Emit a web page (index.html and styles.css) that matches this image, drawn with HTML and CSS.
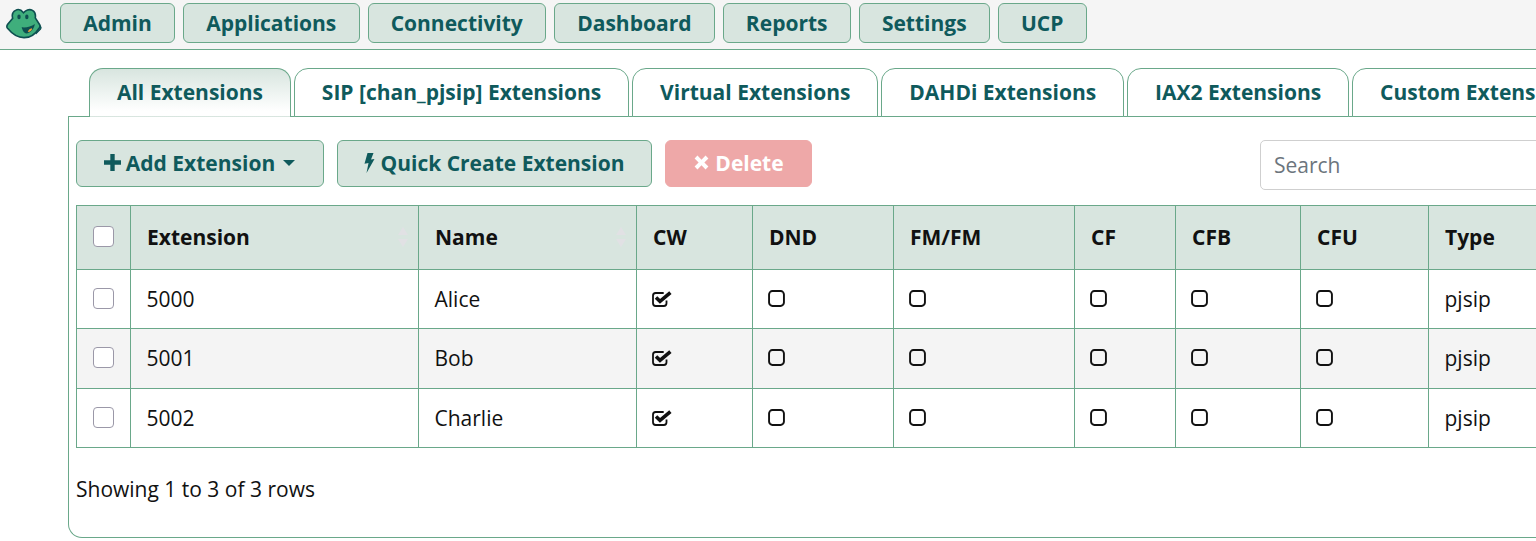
FILE: index.html
```html
<!DOCTYPE html>
<html lang="en">
<head>
<meta charset="utf-8">
<title>Extensions</title>
<link rel="stylesheet" href="styles.css">
</head>
<body>
<svg class="defs" width="0" height="0" aria-hidden="true">
  <symbol id="sq" viewBox="0 0 16 16"><rect x="1" y="1" width="14" height="14" rx="3.200" fill="none" stroke="currentColor" stroke-width="1.800"/></symbol>
  <symbol id="sqc" viewBox="0 0 20 16"><path d="M14.500 9.500V12.300a2.700 2.700 0 0 1-2.700 2.700H3.700A2.700 2.700 0 0 1 1 12.300V4.700A2.700 2.700 0 0 1 3.700 2h8" fill="none" stroke="currentColor" stroke-width="1.800"/><path d="M4 6.500L8 10.300 18.400 1.600" fill="none" stroke="currentColor" stroke-width="3.600"/></symbol>
  <symbol id="sort" viewBox="0 0 10 20"><path d="M5 0l5 8H0zM5 20l5-8H0z" fill="#e1e1e4"/></symbol>
</svg>
<nav class="topbar">
  <svg class="logo" viewBox="0 0 40 34" aria-hidden="true">
    <path d="M30 11l7.500 8.500c.8 1 .8 2 0 3L33 27l-3-8z" fill="#1b8b8a" stroke="#0e4f50" stroke-width="1.400"/>
    <path d="M11 2.500C14.500 .5 17.500 2.500 19.500 5c2-2.500 6-4.500 9.500-2.500 3 1.700 3.500 5 3 8l4.500 7c.8 1.500.5 3-.5 4-3 5-8.500 10-16 10S7 27 2.500 21.500c-1-1.300-1-2.500 0-4L8 11C7 7.500 8 4 11 2.500z" fill="#3fae7c" stroke="#0e4f50" stroke-width="1.700"/>
    <ellipse cx="14.700" cy="9.500" rx="1.800" ry="2.500" fill="#0e4f50"/><ellipse cx="23" cy="9.500" rx="1.800" ry="2.500" fill="#0e4f50"/>
    <path d="M17.500 20.500c5 .5 10-.5 14-3.500-.5 5-5 10-9 10-2.500 0-4-3-5-6.500z" fill="#0e4f50"/>
    <path d="M24 25.500c.5-2 2-3.500 4.500-4 .3 2-1.500 4-4.500 4z" fill="#f0a13a"/>
  </svg>
  <a class="navbtn">Admin</a>
  <a class="navbtn">Applications</a>
  <a class="navbtn">Connectivity</a>
  <a class="navbtn">Dashboard</a>
  <a class="navbtn">Reports</a>
  <a class="navbtn">Settings</a>
  <a class="navbtn">UCP</a>
</nav>
<main class="content">
  <ul class="tabs">
    <li class="tab active">All Extensions</li>
    <li class="tab">SIP [chan_pjsip] Extensions</li>
    <li class="tab">Virtual Extensions</li>
    <li class="tab">DAHDi Extensions</li>
    <li class="tab">IAX2 Extensions</li>
    <li class="tab">Custom Extensions</li>
  </ul>
  <section class="panel">
    <div class="toolbar">
      <button class="btn add"><svg class="ic" viewBox="1 1 14 14"><path d="M6.200 1h3.600v5.200H15v3.600H9.800V15H6.200V9.800H1V6.200h5.200z" fill="currentColor"/></svg>Add Extension<svg class="caret" viewBox="0 0 12 6"><path d="M0 0h12L6 6z" fill="currentColor"/></svg></button>
      <button class="btn quick"><svg class="ic bolt" viewBox="0 0 10 20"><path d="M3 0h6L6.500 6.500 10 6 2 20l2-10-4 .8z" fill="currentColor"/></svg>Quick Create Extension</button>
      <button class="btn del"><svg class="ic" viewBox="0 0 16 16"><path d="M4.200 1.500L8 5.300l3.800-3.800 2.700 2.700L10.700 8l3.800 3.800-2.700 2.700L8 10.700l-3.800 3.800-2.700-2.700L5.300 8 1.500 4.200z" fill="currentColor"/></svg>Delete</button>
      <input class="search" type="text" placeholder="Search">
    </div>
    <table class="grid">
      <colgroup>
        <col class="c-sel"><col class="c-ext"><col class="c-name"><col class="c-cw"><col class="c-dnd"><col class="c-fm"><col class="c-cf"><col class="c-cfb"><col class="c-cfu"><col class="c-type">
      </colgroup>
      <thead>
        <tr>
          <th class="sel"><span class="box"></span></th>
          <th><div class="sortable">Extension<svg class="sort"><use href="#sort"/></svg></div></th>
          <th><div class="sortable">Name<svg class="sort"><use href="#sort"/></svg></div></th>
          <th>CW</th><th>DND</th><th>FM/FM</th><th>CF</th><th>CFB</th><th>CFU</th><th>Type</th>
        </tr>
      </thead>
      <tbody>
        <tr>
          <td class="sel"><span class="box"></span></td><td>5000</td><td>Alice</td>
          <td><svg class="chk"><use href="#sqc"/></svg></td>
          <td><svg class="unchk"><use href="#sq"/></svg></td><td><svg class="unchk"><use href="#sq"/></svg></td><td><svg class="unchk"><use href="#sq"/></svg></td><td><svg class="unchk"><use href="#sq"/></svg></td><td><svg class="unchk"><use href="#sq"/></svg></td>
          <td>pjsip</td>
        </tr>
        <tr class="alt">
          <td class="sel"><span class="box"></span></td><td>5001</td><td>Bob</td>
          <td><svg class="chk"><use href="#sqc"/></svg></td>
          <td><svg class="unchk"><use href="#sq"/></svg></td><td><svg class="unchk"><use href="#sq"/></svg></td><td><svg class="unchk"><use href="#sq"/></svg></td><td><svg class="unchk"><use href="#sq"/></svg></td><td><svg class="unchk"><use href="#sq"/></svg></td>
          <td>pjsip</td>
        </tr>
        <tr class="last">
          <td class="sel"><span class="box"></span></td><td>5002</td><td>Charlie</td>
          <td><svg class="chk"><use href="#sqc"/></svg></td>
          <td><svg class="unchk"><use href="#sq"/></svg></td><td><svg class="unchk"><use href="#sq"/></svg></td><td><svg class="unchk"><use href="#sq"/></svg></td><td><svg class="unchk"><use href="#sq"/></svg></td><td><svg class="unchk"><use href="#sq"/></svg></td>
          <td>pjsip</td>
        </tr>
      </tbody>
    </table>
    <p class="summary">Showing 1 to 3 of 3 rows</p>
  </section>
</main>
</body>
</html>
```
FILE: styles.css
```css
* { box-sizing: border-box; }
html, body { margin: 0; height: 541px; overflow: hidden; background: #fff; }
body { font-family: "Open Sans", "Noto Sans", sans-serif; font-size: 21px; color: #111; }
.defs { display: block; height: 0; }

.topbar { display: flex; align-items: flex-start; gap: 8px; height: 50px; padding: 3px 0 0 5px; background: #f5f5f5; border-bottom: 1px solid #6aa88a; }
.logo { width: 38px; height: 32px; margin: 5px 9px 0 0; flex: none; }
.navbtn { display: block; height: 40px; padding: 0 22.200px; line-height: 39px; font-weight: 700; color: #0f5a5c; background: #d8e5df; border: 1px solid #6aa88a; border-radius: 6px; }

.content { width: 1800px; padding: 18px 0 0 68px; }
.tabs { display: flex; gap: 3px; list-style: none; margin: 0 0 -1px; padding: 0 0 0 21px; position: relative; z-index: 1; }
.tab { height: 49px; padding: 8px 26.930px 0; line-height: 30px; font-weight: 700; color: #0f5a5c; background: #fff; border: 1px solid #6aa88a; border-radius: 14px 14px 0 0; white-space: nowrap; }
.tab.active { border-bottom-color: transparent; background: linear-gradient(#d8e5df, #fff 90%); }

.panel { height: 422px; padding: 23px 0 0 7px; border: 1px solid #6aa88a; border-right: 0; border-radius: 0 0 0 14px; }
.toolbar { display: flex; align-items: flex-start; gap: 13px; height: 65px; width: 1584px; }
.btn { display: flex; align-items: center; justify-content: center; height: 47px; padding: 0 0 2px; font: 700 21px "Open Sans", sans-serif; color: #0f5a5c; background: #d8e5df; border: 1px solid #6aa88a; border-radius: 6px; }
.add { width: 248px; padding-right: 1px; }
.quick { width: 315px; }
.del { width: 147px; color: #fff; background: #eea8a8; border-color: #eea8a8; }
.ic { width: 17px; height: 17px; margin-right: 5px; flex: none; }
.bolt { width: 11px; height: 20px; }
.caret { width: 12px; height: 6px; margin-left: 8px; }
.search { width: 400px; height: 50px; margin-left: auto; padding: 0 13px; font: 400 21px "Open Sans", sans-serif; color: #333; border: 1px solid #cfcfcf; border-radius: 5px; flex: none; }
.search::placeholder { color: #6c757d; opacity: 1; }

.grid { table-layout: fixed; width: 1500px; border-collapse: collapse; }
.c-sel { width: 54px; } .c-ext { width: 288px; } .c-name { width: 218px; } .c-cw { width: 116px; } .c-dnd { width: 141px; } .c-fm { width: 181px; } .c-cf { width: 101px; } .c-cfb { width: 125px; } .c-cfu { width: 128px; } .c-type { width: 148px; }
.grid th, .grid td { padding: 0 16px; text-align: left; border: 1px solid #6aa88a; }
.grid th { height: 64px; padding-bottom: 1px; font-weight: 700; color: #111; background: #d8e5df; }
.grid td { height: 59.330px; padding: 0 16px 1px 15.500px; }
.grid .last td { padding-top: 1px; }
.alt td { background: #f4f4f4; }
.grid .sel { padding: 0 0 2px; text-align: center; line-height: 0; }
.grid .last .sel { padding: 0 0 1px; }
.box { display: inline-block; width: 21px; height: 21px; background: #fff; border: 1px solid #9b98a8; border-radius: 4px; }
.sortable { display: flex; align-items: center; justify-content: space-between; margin-right: -6px; }
.sort { width: 10px; height: 20px; }
.chk { display: block; width: 20px; height: 16px; margin-left: -.5px; color: #111; }
.unchk { display: block; width: 17px; height: 17px; margin-left: -1px; color: #111; }
.summary { margin: 26px 0 0; line-height: 30px; }
```
